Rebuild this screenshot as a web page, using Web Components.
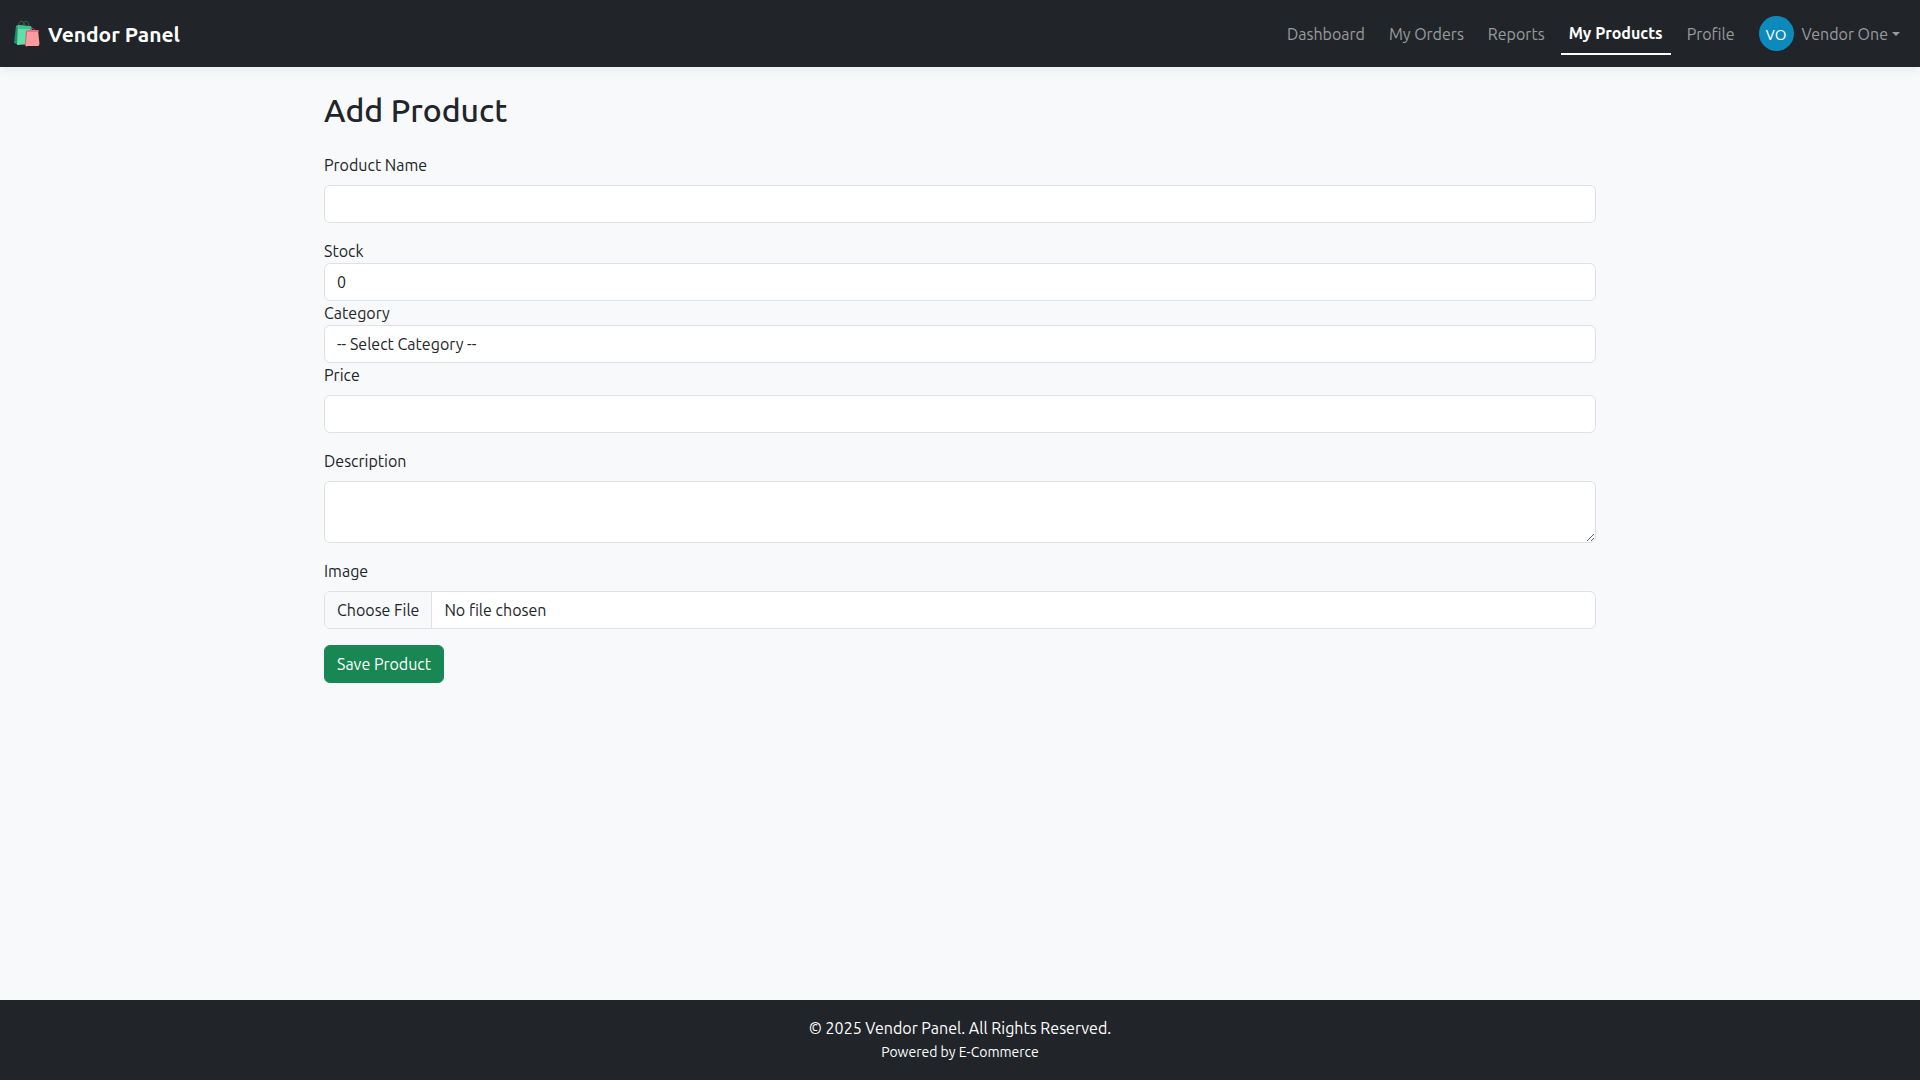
<!DOCTYPE html>
<html lang="en">
<head>
<meta charset="utf-8">
<meta name="viewport" content="width=device-width, initial-scale=1">
<title>Add Product - Vendor Panel</title>
<style>
  body {
    margin: 0;
    font: 400 16px/24px Ubuntu, Roboto, sans-serif;
    color: #212529;
    background: #f8f9fb;
  }
</style>
</head>
<body>
<vp-page>
  <vp-navbar slot="header">
    <vp-brand slot="brand">Vendor Panel</vp-brand>
    <vp-nav-link>Dashboard</vp-nav-link>
    <vp-nav-link>My Orders</vp-nav-link>
    <vp-nav-link>Reports</vp-nav-link>
    <vp-nav-link active>My Products</vp-nav-link>
    <vp-nav-link>Profile</vp-nav-link>
    <vp-user-menu initials="VO">Vendor One</vp-user-menu>
  </vp-navbar>
  <vp-product-form></vp-product-form>
  <vp-footer slot="footer">
    © 2025 Vendor Panel. All Rights Reserved.
    <span slot="note">Powered by E-Commerce</span>
  </vp-footer>
</vp-page>

<script>
class VpElement extends HTMLElement {
  constructor() {
    super();
    this.attachShadow({ mode: 'open' }).innerHTML =
      `<style>*{box-sizing:border-box}${this.constructor.css}</style>`;
  }
  connectedCallback() {
    if (this.ready) return;
    this.ready = true;
    this.shadowRoot.innerHTML += this.render();
  }
}

class VpPage extends VpElement {
  static css = `
    :host { display: flex; flex-direction: column; min-height: 100vh; }
    main { flex: 1; width: 100%; max-width: 1320px; margin: 0 auto; padding: 24px; }
  `;
  render() {
    return `<slot name="header"></slot><main><slot></slot></main><slot name="footer"></slot>`;
  }
}

class VpNavbar extends VpElement {
  static css = `
    :host { display: block; position: relative; background: #212529; box-shadow: 0 2px 10px rgba(0,0,0,.08); }
    nav { display: flex; align-items: center; justify-content: space-between; padding: 8px 12px; }
    .links { display: flex; align-items: center; gap: 8px; }
  `;
  render() {
    return `<nav aria-label="Main"><slot name="brand"></slot><div class="links"><slot></slot></div></nav>`;
  }
}

class VpBrand extends VpElement {
  static css = `
    :host { display: block; }
    a { display: flex; align-items: center; gap: 6px; color: #fff; text-decoration: none; font-size: 21px; line-height: 30px; font-weight: 700; }
    svg { width: 30px; height: 30px; }
  `;
  render() {
    return `<a href="#">
      <svg viewBox="0 0 30 30" aria-hidden="true">
        <path d="M7 7C6 1 12 1 13 6M11 6c0-5 5-5 6 0" fill="none" stroke="#2c6b5a" stroke-width="1"/>
        <path d="M4 7l4-1-1 20-5-2z" fill="#218f77"/>
        <path d="M6 6l13 2 1 4-1 13-14 1z" fill="#5fe0a4"/>
        <path d="M4 7l3-1 12 1 1 3H7z" fill="#42bd8b"/>
        <path d="M18 13c0-5 4-5 5 0" fill="none" stroke="#96636a" stroke-width="1"/>
        <path d="M14 12l3-1-2 17-2-2z" fill="#c84b70"/>
        <path d="M15 12l11-1 1.500 14-1 2H13.500z" fill="#ff9a9d"/>
        <path d="M14 12l2-1h10.500v2H15z" fill="#ed7186"/>
      </svg><slot></slot></a>`;
  }
}

class VpNavLink extends VpElement {
  static css = `
    :host { display: block; }
    a { display: block; padding: 8px; color: rgba(255,255,255,.55); text-decoration: none; white-space: nowrap; }
    :host([active]) a { color: #fff; font-weight: 700; border-bottom: 2px solid #fff; }
  `;
  render() {
    return `<a href="#"${this.hasAttribute('active') ? ' aria-current="page"' : ''}><slot></slot></a>`;
  }
}

class VpUserMenu extends VpElement {
  static css = `
    :host { display: block; }
    button { display: flex; align-items: center; padding: 8px; border: 0; background: none; font: inherit; color: rgba(255,255,255,.55); white-space: nowrap; }
    .avatar { display: grid; place-items: center; width: 35px; height: 35px; margin-right: 8px; border-radius: 50%; background: #0d8abc; color: #fff; font-family: "Open Sans", sans-serif; font-size: 15px; }
    .caret { margin-left: 4px; border: 4px solid transparent; border-top-color: currentColor; border-bottom: 0; }
  `;
  render() {
    return `<button type="button" aria-haspopup="menu"><span class="avatar">${this.getAttribute('initials')}</span><slot></slot><span class="caret"></span></button>`;
  }
}

class VpField extends VpElement {
  static css = `
    :host { display: block; margin-bottom: 16px; }
    :host([compact]) { margin-bottom: 0; }
    label { display: block; margin-bottom: 8px; }
    :host([compact]) label { margin-bottom: 0; }
    input, select, textarea {
      display: block; width: 100%; height: 38px; margin: 0; padding: 6px 12px;
      font: inherit; color: inherit; background: #fff;
      border: 1px solid #dee2e6; border-radius: 6px; appearance: none;
    }
    textarea { height: auto; min-height: 62px; resize: vertical; }
    input[type=number] { appearance: textfield; }
    input[type=file] { overflow: hidden; }
    input::file-selector-button {
      margin: -6px 12px -6px -12px; padding: 6px 12px; font: inherit; color: inherit;
      background: #f8f9fa; border: 0 solid #dee2e6; border-inline-end-width: 1px; border-radius: 0;
    }
  `;
  render() {
    const kind = this.getAttribute('kind') || 'text';
    const value = this.getAttribute('value') || '';
    const control =
      kind === 'select' ? `<select id="control"><option>${value}</option></select>` :
      kind === 'textarea' ? `<textarea id="control" rows="2"></textarea>` :
      kind === 'file' ? `<input id="control" type="file">` :
      `<input id="control" type="${kind}" value="${value}">`;
    return `<label for="control">${this.getAttribute('label')}</label>${control}`;
  }
}

class VpProductForm extends VpElement {
  static css = `
    :host { display: block; }
    h2 { margin: 0 0 24px; font-size: 32px; line-height: 38px; font-weight: 500; }
    button { display: block; padding: 6px 12px; font: inherit; color: #fff; background: #198754; border: 1px solid #198754; border-radius: 6px; }
  `;
  render() {
    return `<h2>Add Product</h2>
      <form>
        <vp-field label="Product Name"></vp-field>
        <vp-field label="Stock" kind="number" value="0" compact></vp-field>
        <vp-field label="Category" kind="select" value="-- Select Category --" compact></vp-field>
        <vp-field label="Price" kind="number"></vp-field>
        <vp-field label="Description" kind="textarea"></vp-field>
        <vp-field label="Image" kind="file"></vp-field>
        <button type="submit">Save Product</button>
      </form>`;
  }
}

class VpFooter extends VpElement {
  static css = `
    :host { display: block; background: #212529; color: #fff; text-align: center; }
    footer { padding: 16px 12px; }
    p { margin: 0; }
    small { display: block; font-size: 14px; }
  `;
  render() {
    return `<footer><p><slot></slot></p><small><slot name="note"></slot></small></footer>`;
  }
}

customElements.define('vp-page', VpPage);
customElements.define('vp-navbar', VpNavbar);
customElements.define('vp-brand', VpBrand);
customElements.define('vp-nav-link', VpNavLink);
customElements.define('vp-user-menu', VpUserMenu);
customElements.define('vp-field', VpField);
customElements.define('vp-product-form', VpProductForm);
customElements.define('vp-footer', VpFooter);
</script>
</body>
</html>
